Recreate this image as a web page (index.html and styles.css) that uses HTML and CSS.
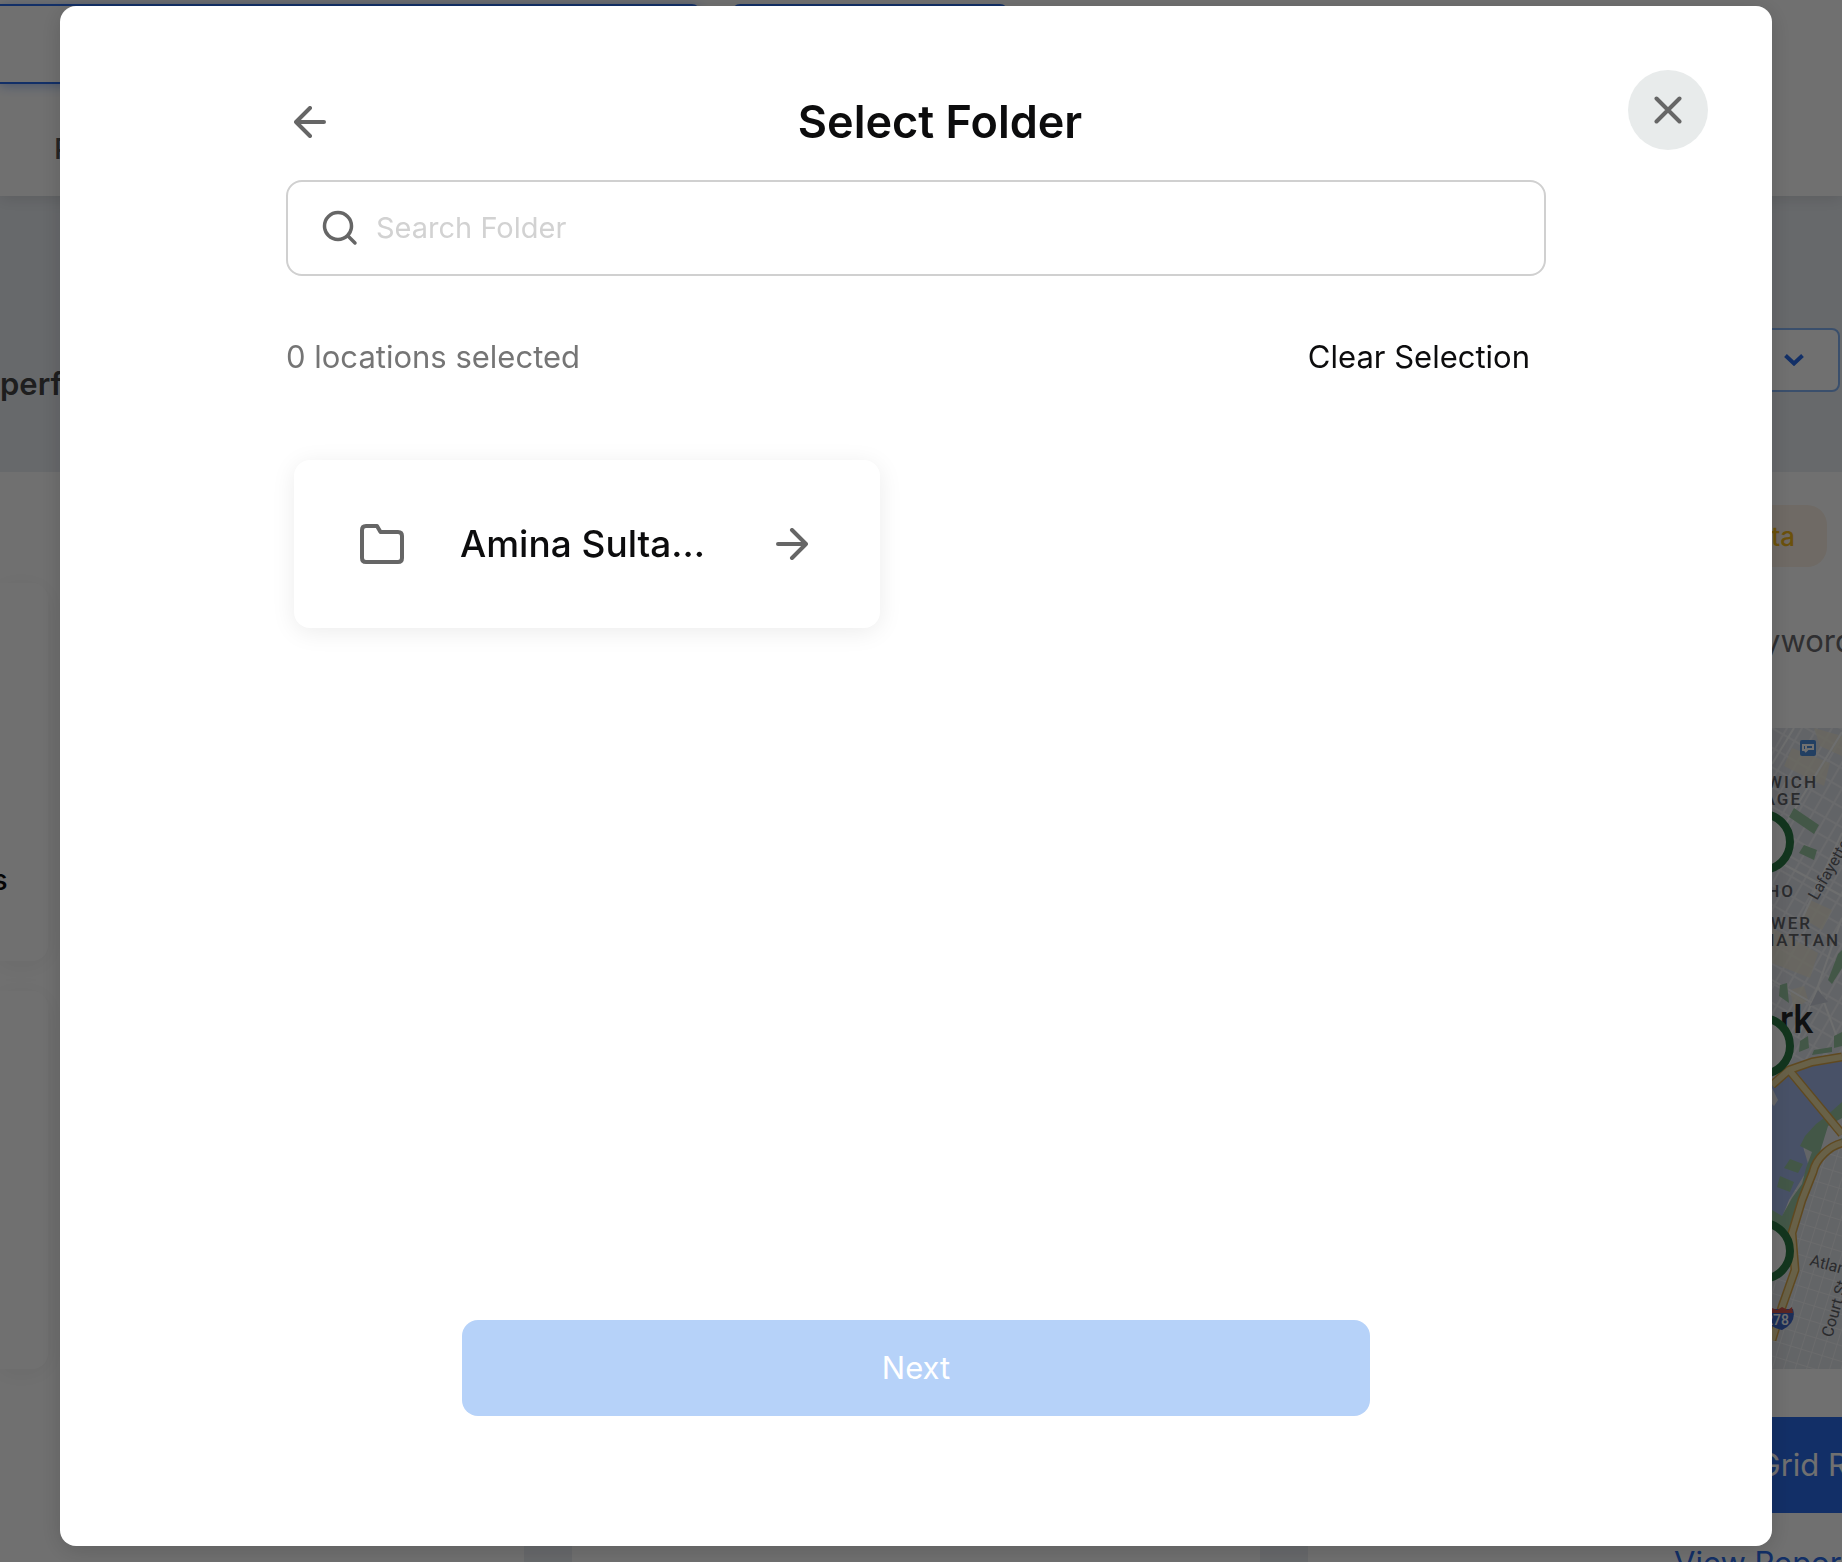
FILE: index.html
```html
<!DOCTYPE html>
<html lang="en">
<head>
<meta charset="utf-8">
<meta name="viewport" content="width=device-width, initial-scale=1">
<title>Select Folder</title>
<link rel="stylesheet" href="styles.css">
</head>
<body>
<div class="page">
  <header class="topbar">
    <div class="topbar-row">
      <div class="topbar-field"></div>
      <div class="topbar-button"></div>
    </div>
    <nav class="nav"><span class="nav-item">P</span></nav>
  </header>
  <section class="banner">
    <span class="banner-title">perf</span>
    <div class="dropdown">
      <svg width="20" height="12" viewBox="0 0 20 12" fill="none" stroke="currentColor" stroke-width="4"><path d="M1.5 1.5 10 9.500 18.500 1.500"/></svg>
    </div>
  </section>
  <main class="columns">
    <section class="column column-left">
      <div class="tile"><span>s</span></div>
      <div class="tile"></div>
    </section>
    <section class="column"></section>
    <section class="column column-right">
      <div class="tag">ta</div>
      <div class="keyword">yword</div>
      <svg class="map" viewBox="0 0 70 641" preserveAspectRatio="xMaxYMin meet">
        <defs>
          <pattern id="blocks" width="13" height="17" patternUnits="userSpaceOnUse" patternTransform="rotate(30)">
            <rect width="13" height="17" fill="#f0f2f5"/>
            <rect x="1" y="1" width="11" height="15" fill="#e0e3ea"/>
          </pattern>
          <pattern id="blocks-south" width="11" height="15" patternUnits="userSpaceOnUse" patternTransform="rotate(17)">
            <rect width="11" height="15" fill="#f2f4f6"/>
            <rect x="1" y="1" width="10" height="14" fill="#e2e5ea"/>
          </pattern>
        </defs>
        <rect width="70" height="641" fill="url(#blocks)"/>
        <rect y="345" width="70" height="296" fill="url(#blocks-south)"/>
        <g fill="#f1ecd9" opacity=".75">
          <path d="M20 20 58 35 52 58 12 38z"/>
          <path d="M42 0 70 8V28L48 18z"/>
          <path d="M38 172 60 182 50 202 30 190z"/>
          <path d="M0 200 46 225 38 250 0 235z"/>
          <path d="M18 262 32 258 36 272 22 282z"/>
        </g>
        <g stroke="#f8fafb" stroke-width="2" fill="none">
          <path d="M0 36 22 0M0 118 70 4M28 195 70 105M46 258 70 190M0 130 70 168M0 252 42 276M46 258 26 310M46 258 66 312"/>
        </g>
        <path d="M46 262 38 278 56 274z" fill="#cdd2dc"/>
        <g fill="#98c6a2">
          <path d="M22 80 47 97 42 106 17 89z"/>
          <path d="M32 117 45 122 42 132 27 125z"/>
          <path d="M66 226 70 222V240L60 256 56 252z"/>
          <path d="M8 257 15 255 17 275 7 268z"/>
          <path d="M28 313 36 308 37 320 27 324zM62 308 70 304V318L62 320zM42 322 60 319V324L40 327z"/>
        </g>
        <path d="M0 355 17 342 70 329V384L47 397 30 415 37 439 17 472 10 489 0 484z" fill="#a4b9ea"/>
        <path d="M0 360 6 372 2 378 0 376z" fill="#e4e7ec"/>
        <path d="M70 374 52 390 44 396 33 408 28 418 40 424 34 440 30 456 20 470 10 488 0 482V500L20 506 32 470 44 436 60 420 70 412z" fill="#98c6a2"/>
        <path d="M18 431 31 436 26 445 12 440zM8 448 22 454 18 464 5 459z" fill="#98c6a2"/>
        <path d="M70 390 56 398 48 424 60 416 70 410z" fill="#e8ebef"/>
        <g fill="none" stroke-linejoin="round">
          <path d="M0 357 17 342 40 334 70 329M17 342 70 406M70 415C58 418 44 430 41 444L30 472 20 505 23 542 10 579 0 612" stroke="#d9a74a" stroke-width="9"/>
          <path d="M0 357 17 342 40 334 70 329M17 342 70 406M70 415C58 418 44 430 41 444L30 472 20 505 23 542 10 579 0 612" stroke="#eddca4" stroke-width="6"/>
        </g>
        <circle cx="-10" cy="114" r="28" fill="#fff" stroke="#2a7a44" stroke-width="8"/>
        <rect x="28" y="12" width="16" height="16" rx="2" fill="#4f8fe0"/>
        <path d="M31 17h3v5h-3zM33 17h8v4h-5l-3 3" fill="none" stroke="#fff" stroke-width="2"/>
        <g class="map-area" text-anchor="end">
          <text x="46" y="60">WICH</text>
          <text x="30" y="77">AGE</text>
          <text x="23" y="169">HO</text>
          <text x="40" y="201">WER</text>
          <text x="68" y="218">HATTAN</text>
        </g>
        <g class="map-street">
          <text transform="translate(45 173) rotate(-60)">Lafayette</text>
          <text transform="translate(37 537) rotate(15)">Atlan</text>
          <text transform="translate(60 610) rotate(-74)">Court St</text>
        </g>
        <text class="map-city" x="41" y="305" text-anchor="end">rk</text>
        <g fill="#fff" stroke="#2a7a44" stroke-width="8">
          <circle cx="-10" cy="318" r="28"/>
          <circle cx="-10" cy="523" r="28"/>
        </g>
        <path d="M0 581H21Q25 595 10 602 4 601 0 598z" fill="#3f68c8"/>
        <path d="M0 580 5 582 10 579 16 582 20 579 21 585H0z" fill="#d0554e"/>
        <text class="map-route" x="17" y="597" text-anchor="end">278</text>
      </svg>
      <div class="grid-button">Grid R</div>
      <a class="report-link" href="#report">View Report</a>
    </section>
  </main>
</div>

<div class="overlay">
  <div class="modal" role="dialog" aria-modal="true" aria-labelledby="dialog-title">
    <button class="close" type="button" aria-label="Close">
      <svg width="28" height="28" viewBox="0 0 28 28" fill="none" stroke="currentColor" stroke-width="4" stroke-linecap="round"><path d="M2.500 2.500 25.500 25.500M25.500 2.500 2.500 25.500"/></svg>
    </button>
    <div class="modal-head">
      <button class="back" type="button" aria-label="Back">
        <svg width="32" height="32" viewBox="0 0 32 32" fill="none" stroke="currentColor" stroke-width="4" stroke-linecap="round" stroke-linejoin="round"><path d="M30 16H2M16 2 2 16 16 30"/></svg>
      </button>
      <h1 class="title" id="dialog-title">Select Folder</h1>
    </div>
    <label class="search">
      <svg width="36" height="36" viewBox="0 0 36 36" fill="none" stroke="currentColor" stroke-width="3.500" stroke-linecap="round"><circle cx="16" cy="16" r="13.500"/><path d="M26 26 33 33"/></svg>
      <input type="text" placeholder="Search Folder" aria-label="Search Folder">
    </label>
    <div class="status">
      <span>0 locations selected</span>
      <button class="clear" type="button">Clear Selection</button>
    </div>
    <div class="folders">
      <button class="folder" type="button">
        <svg width="44" height="40" viewBox="0 0 44 40" fill="none" stroke="currentColor" stroke-width="4" stroke-linejoin="round"><path d="M2 6Q2 2 6 2H17L20.500 8H38Q42 8 42 12V34Q42 38 38 38H6Q2 38 2 34Z"/></svg>
        <span class="folder-name">Amina Sulta...</span>
        <svg width="32" height="32" viewBox="0 0 32 32" fill="none" stroke="currentColor" stroke-width="4" stroke-linecap="round" stroke-linejoin="round"><path d="M2 16H30M16 2 30 16 16 30"/></svg>
      </button>
    </div>
    <button class="next" type="button">Next</button>
  </div>
</div>
</body>
</html>
```
FILE: styles.css
```css
*, *::before, *::after { box-sizing: border-box; }

body {
  margin: 0;
  font-family: Inter, "Liberation Sans", sans-serif;
  font-size: 31px;
  line-height: 40px;
  color: #0c0c0d;
  overflow: hidden;
}

button, input { font: inherit; color: inherit; }
button { border: 0; padding: 0; background: none; cursor: pointer; }
svg { display: block; flex: none; }

/* Page behind the dialog */
.page {
  display: flex;
  flex-direction: column;
  height: 100vh;
  overflow: hidden;
  background: #ebeff4;
}

.topbar {
  position: relative;
  height: 196px;
  padding-top: 4px;
  background: #fff;
  box-shadow: 0 2px 16px rgba(0, 0, 0, .12);
}
.topbar-row { display: flex; gap: 32px; }
.topbar-field {
  width: 38%;
  height: 80px;
  border: 2px solid #2a6cea;
  border-left: 0;
  border-radius: 0 8px 8px 0;
  box-shadow: 0 2px 12px rgba(42, 108, 234, .4);
}
.topbar-button {
  width: 15%;
  height: 80px;
  border-radius: 8px;
  background: #2a6cea;
}
.nav { padding: 44px 0 0 54px; }
.nav-item { font-size: 29px; font-weight: 500; color: #555; }

.banner {
  display: flex;
  flex: none;
  align-items: flex-start;
  justify-content: space-between;
  height: 276px;
  padding: 132px 2px 0 0;
}
.banner-title {
  padding-top: 36px;
  font-weight: 600;
  color: #444;
}
.dropdown {
  display: flex;
  align-items: center;
  justify-content: flex-end;
  width: 200px;
  height: 64px;
  padding: 0 34px;
  border: 2px solid #85b4f5;
  border-radius: 8px;
  background: #fff;
  color: #2a6cea;
}

.columns {
  display: grid;
  flex: 1;
  grid-template-columns: 524fr 688fr 534fr;
  gap: 48px;
  min-height: 0;
}
.column { min-width: 0; background: #fff; }
.column-left {
  display: flex;
  flex-direction: column;
  gap: 30px;
  padding-top: 111px;
}
.tile {
  display: flex;
  align-items: center;
  width: 48px;
  height: 378px;
  padding-top: 216px;
  border-radius: 0 16px 16px 0;
  box-shadow: 0 4px 24px rgba(0, 0, 0, .06);
  font-size: 29px;
  font-weight: 500;
}
.tile span { margin-left: -8px; }

.column-right {
  display: flex;
  flex-direction: column;
  align-items: flex-end;
  padding-top: 33px;
}
.tag {
  height: 62px;
  margin-right: 15px;
  padding: 12px 32px;
  border-radius: 20px;
  background: #fcf1e5;
  color: #f4b81a;
  font-size: 26px;
  font-weight: 500;
}
.keyword { margin: 54px -12px 0 0; color: #6c6c70; }
.map {
  width: 100%;
  height: 641px;
  margin-top: 67px;
}
.map text { font-family: Roboto, "Liberation Sans", sans-serif; }
.map-area { font-size: 17px; font-weight: 500; letter-spacing: 2px; fill: #606268; }
.map-street { font-size: 16px; fill: #606268; }
.map-city { font-size: 38px; font-weight: 500; fill: #26272a; }
.map-route { font-size: 14px; font-weight: 500; fill: #fff; }
.grid-button {
  align-self: stretch;
  margin: 48px -6px 0 0;
  padding: 28px 0;
  background: #2a6cea;
  color: #fff;
  text-align: right;
}
.report-link {
  margin: 30px -10px 0 0;
  color: #2a6cea;
  text-decoration: none;
  white-space: nowrap;
}

/* Dialog */
.overlay {
  position: fixed;
  inset: 0;
  display: flex;
  padding: 6px 70px 16px 60px;
  background: rgba(0, 0, 0, .56);
}
.modal {
  position: relative;
  display: flex;
  flex: 1;
  flex-direction: column;
  padding: 90px 226px 130px;
  border-radius: 16px;
  background: #fff;
  box-shadow: 0 4px 24px rgba(0, 0, 0, .16);
}
.close {
  position: absolute;
  top: 64px;
  right: 64px;
  display: grid;
  place-items: center;
  width: 80px;
  height: 80px;
  border-radius: 50%;
  background: #e8ebeb;
  color: #666;
}
.modal-head { display: flex; align-items: center; height: 52px; }
.back {
  display: grid;
  place-items: center;
  width: 48px;
  height: 48px;
  color: #666;
}
.title {
  flex: 1;
  margin: 0;
  font-size: 45px;
  font-weight: 600;
  line-height: 56px;
  text-align: center;
}
.search {
  display: flex;
  align-items: center;
  gap: 18px;
  height: 96px;
  margin-top: 32px;
  padding: 0 34px;
  border: 2px solid #d0d0d0;
  border-radius: 16px;
  color: #666;
}
.search input {
  flex: 1;
  min-width: 0;
  padding: 0;
  border: 0;
  outline: 0;
  background: none;
  font-size: 29px;
}
.search input::placeholder { color: #d2d2d2; opacity: 1; }
.status {
  display: flex;
  align-items: center;
  justify-content: space-between;
  margin-top: 61px;
  padding-right: 16px;
  color: #757575;
}
.clear { color: #0c0c0d; }
.folders { display: flex; margin-top: 83px; padding-left: 8px; }
.folder {
  display: flex;
  align-items: center;
  width: 586px;
  height: 168px;
  padding: 0 72px 0 66px;
  border-radius: 16px;
  background: #fff;
  box-shadow: 0 4px 24px rgba(0, 0, 0, .08);
  color: #666;
}
.folder-name {
  flex: 1;
  padding-left: 56px;
  color: #0c0c0d;
  font-size: 37px;
  font-weight: 500;
  line-height: 48px;
  text-align: left;
  white-space: nowrap;
}
.next {
  width: 72%;
  height: 96px;
  margin: auto auto 0;
  border-radius: 16px;
  background: #b6d2f9;
  color: #fff;
}
```
